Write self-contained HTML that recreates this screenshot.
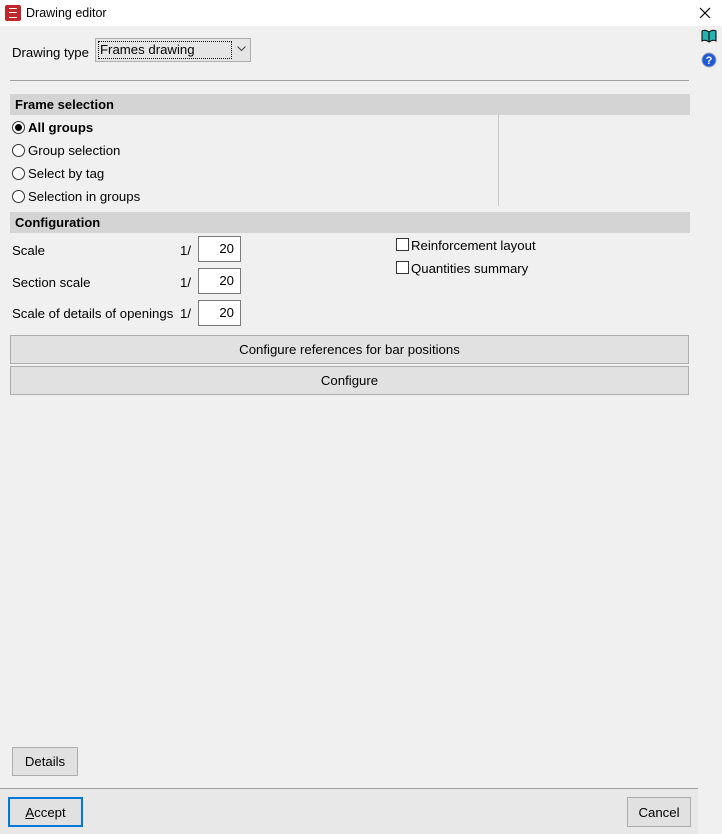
<!DOCTYPE html>
<html><head><meta charset="utf-8"><style>
*{box-sizing:border-box;margin:0;padding:0}
body{width:722px;height:834px;background:#f0f0f0;font-family:"Liberation Sans",sans-serif;font-size:13.2px;color:#000;position:relative;overflow:hidden}
.a{position:absolute;white-space:nowrap}
.hdr{position:absolute;left:10px;width:680px;height:21px;background:#d4d4d4;font-weight:bold;padding-left:5px;line-height:21px;font-size:13px}
.rad{position:absolute;left:12px;width:13px;height:13px;border:1px solid #333;border-radius:50%;background:#fff}
.inp{position:absolute;left:198px;width:43px;height:26px;background:#fff;border:1px solid #7a7a7a;text-align:right;padding-right:6px;line-height:24px}
.chk{position:absolute;left:396px;width:13px;height:13px;border:1px solid #333;background:#fff}
.btn{position:absolute;background:#e1e1e1;border:1px solid #adadad;text-align:center}
</style></head><body>
<div class="a" style="left:0;top:0;width:722px;height:26px;background:#fff"></div>
<div class="a" style="left:5px;top:5px;width:16px;height:16px;background:#c0262c;border-radius:2px"><div style="position:absolute;left:4px;top:3px;width:8px;height:10px;border:1px solid #fff;border-width:1px 0"></div><div style="position:absolute;left:4px;top:7px;width:8px;height:1px;background:#fff"></div></div>
<div class="a" style="left:26px;top:6px;font-size:12.5px">Drawing editor</div>
<svg class="a" style="left:699px;top:7px" width="12" height="12"><path d="M1 1L11 11M11 1L1 11" stroke="#000" stroke-width="1.2"/></svg>
<svg class="a" style="left:701px;top:29px" width="16" height="14"><path d="M1 2 Q4 0 8 3 Q12 0 15 2 V12 Q12 10 8 13 Q4 10 1 12Z" fill="#2bb0b0" stroke="#000"/><path d="M8 3V13" stroke="#000"/></svg>
<svg class="a" style="left:701px;top:52px" width="16" height="16"><circle cx="8" cy="8" r="7" fill="#1e5ad6" stroke="#9ab"/><text x="8" y="12" font-size="11" font-weight="bold" fill="#fff" text-anchor="middle" font-family="Liberation Sans">?</text></svg>

<div class="a" style="left:12px;top:45px">Drawing type</div>
<div class="a" style="left:95px;top:38px;width:156px;height:24px;background:#e5e5e5;border:1px solid #adadad"></div>
<div class="a" style="left:98px;top:41px;width:134px;height:18px;border:1px dotted #000;padding-left:1px;line-height:16px">Frames drawing</div>
<svg class="a" style="left:237px;top:46px" width="9" height="6"><path d="M0.5 0.5L4.5 4.5L8.5 0.5" stroke="#444" fill="none"/></svg>
<div class="a" style="left:10px;top:80px;width:679px;height:1px;background:#a0a0a0"></div>

<div class="hdr" style="top:94px">Frame selection</div>
<div class="rad" style="top:121px"><div style="position:absolute;left:2px;top:2px;width:7px;height:7px;border-radius:50%;background:#000"></div></div>
<div class="a" style="left:28px;top:120px;font-weight:bold">All groups</div>
<div class="rad" style="top:144px"></div><div class="a" style="left:28px;top:143px">Group selection</div>
<div class="rad" style="top:167px"></div><div class="a" style="left:28px;top:166px">Select by tag</div>
<div class="rad" style="top:190px"></div><div class="a" style="left:28px;top:189px">Selection in groups</div>
<div class="a" style="left:498px;top:115px;width:1px;height:91px;background:#c8c8c8"></div>

<div class="hdr" style="top:212px">Configuration</div>
<div class="a" style="left:12px;top:243px">Scale</div><div class="a" style="left:180px;top:243px">1/</div><div class="inp" style="top:236px">20</div>
<div class="a" style="left:12px;top:275px">Section scale</div><div class="a" style="left:180px;top:275px">1/</div><div class="inp" style="top:268px">20</div>
<div class="a" style="left:12px;top:306px">Scale of details of openings</div><div class="a" style="left:180px;top:306px">1/</div><div class="inp" style="top:300px">20</div>
<div class="chk" style="top:238px"></div><div class="a" style="left:411px;top:238px">Reinforcement layout</div>
<div class="chk" style="top:261px"></div><div class="a" style="left:411px;top:261px">Quantities summary</div>
<div class="btn" style="left:10px;top:335px;width:679px;height:29px;line-height:28px">Configure references for bar positions</div>
<div class="btn" style="left:10px;top:366px;width:679px;height:29px;line-height:28px">Configure</div>

<div class="btn" style="left:12px;top:747px;width:66px;height:29px;line-height:28px">Details</div>
<div class="a" style="left:0;top:788px;width:698px;height:46px;background:#e8e8e8;border-top:1px solid #a0a0a0"></div>
<div class="btn" style="left:8px;top:797px;width:75px;height:30px;line-height:27px;border:2px solid #0078d7"><u>A</u>ccept</div>
<div class="btn" style="left:627px;top:797px;width:64px;height:30px;line-height:29px">Cancel</div>
</body></html>
